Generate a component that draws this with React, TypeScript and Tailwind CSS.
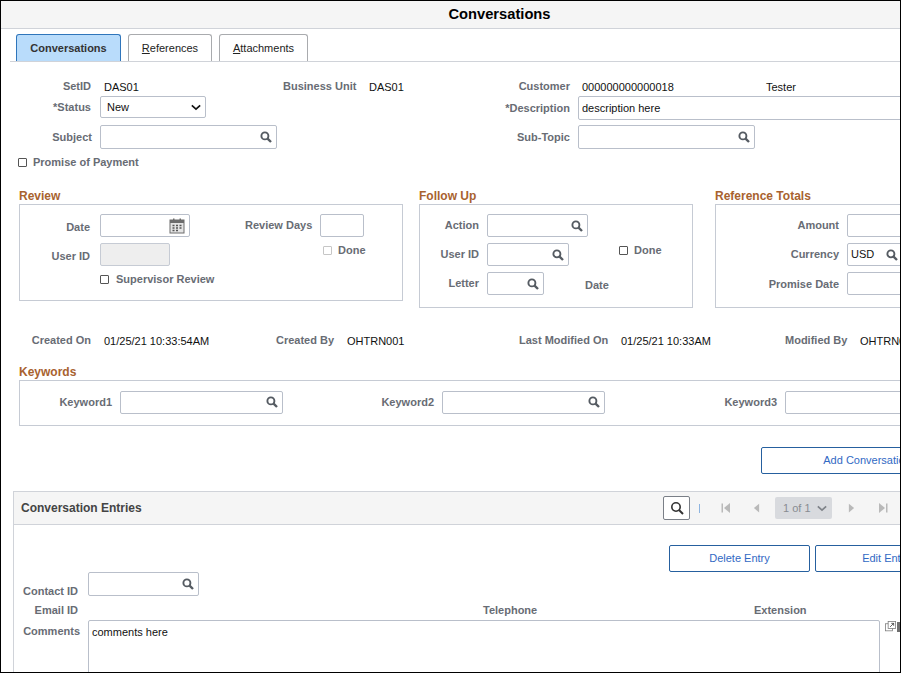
import { ReactNode } from 'react';

function Lbl({ className, children }: { className: string; children: ReactNode }) {
  return <div className={`text-right font-bold text-[#686c74] shrink-0 whitespace-nowrap ${className}`}>{children}</div>;
}

function Val({ className, children }: { className: string; children: ReactNode }) {
  return <div className={`text-[#111] shrink-0 whitespace-nowrap ${className}`}>{children}</div>;
}

function SearchIcon() {
  return (
    <svg viewBox="0 0 12 12" className="w-[12px] h-[12px] shrink-0" fill="none" stroke="#555b62">
      <circle cx="4.9" cy="4.9" r="3.5" strokeWidth="1.9" />
      <path d="M7.6 7.6 L11 11" strokeWidth="2.4" />
    </svg>
  );
}

function Lookup({ className, children }: { className: string; children?: ReactNode }) {
  return (
    <div className={`flex items-center justify-between shrink-0 bg-white border border-[#b9bfca] rounded-[2px] pl-[3px] pr-[4px] ${className}`}>
      <span className="text-[#111]">{children}</span>
      <SearchIcon />
    </div>
  );
}

function Box({ className }: { className: string }) {
  return <div className={`shrink-0 border border-[#b9bfca] rounded-[2px] ${className}`} />;
}

function Check({ className }: { className: string }) {
  return <div className={`w-[9px] h-[9px] shrink-0 border rounded-[1px] bg-white ${className}`} />;
}

function Heading({ children }: { children: ReactNode }) {
  return <div className="h-[16px] leading-[17px] font-bold text-[12px] text-[#a8622f]">{children}</div>;
}

function Button({ className, children }: { className: string; children: ReactNode }) {
  return (
    <div className={`flex items-center justify-center shrink-0 h-[27px] bg-white border border-[#26609f] rounded-[2px] text-[#3169c4] ${className}`}>
      {children}
    </div>
  );
}

export default function App() {
  return (
    <div className="w-[901px] h-[673px] border border-black overflow-hidden bg-white text-[11px] font-['Liberation_Sans',Arial,sans-serif]">
      <div className="w-[1000px]">
        <div className="h-[28px] pr-[3px] bg-[#f5f5f5] border-b border-[#d0d3d9] flex items-center justify-center text-[14.7px] font-bold text-black">
          Conversations
        </div>

        <div className="ml-[9px] mt-[5px] pl-[6px] h-[28px] flex items-end gap-[7px] border-b border-[#d0d3d9]">
          <div className="w-[105px] h-[27px] flex items-center justify-center bg-[#b9dcfb] border border-b-0 border-[#2f75bb] rounded-t-[3px] font-bold text-[#333]">
            Conversations
          </div>
          <div className="w-[84px] h-[27px] flex items-center justify-center bg-white border border-b-0 border-[#a9abae] rounded-t-[3px] text-[#222]">
            <span><span className="underline">R</span>eferences</span>
          </div>
          <div className="w-[89px] h-[27px] flex items-center justify-center bg-white border border-b-0 border-[#a9abae] rounded-t-[3px] text-[#222]">
            <span><span className="underline">A</span>ttachments</span>
          </div>
        </div>

        <div className="mt-[17px] h-[14px] flex items-center">
          <Lbl className="w-[90px]">SetID</Lbl>
          <Val className="ml-[13px] w-[179px] mt-[2px]">DAS01</Val>
          <Lbl className="w-[73px]">Business Unit</Lbl>
          <Val className="ml-[13px] w-[149px] mt-[2px]">DAS01</Val>
          <Lbl className="w-[52px]">Customer</Lbl>
          <Val className="ml-[12px] w-[184px] mt-[2px]">000000000000018</Val>
          <Val className="w-[60px] mt-[2px]">Tester</Val>
        </div>

        <div className="mt-[3px] h-[24px] flex items-center">
          <Lbl className="w-[90px] -mt-[2px]">*Status</Lbl>
          <div className="ml-[9px] w-[106px] h-[22px] self-start flex items-center justify-between border border-[#b9bfca] rounded-[2px] pl-[6px] pr-[4px] text-[#111] shrink-0">
            New
            <svg viewBox="0 0 12 8" className="w-[10px] h-[7px]" fill="none" stroke="#111" strokeWidth="2">
              <path d="M1 1.5 L6 6 L11 1.5" />
            </svg>
          </div>
          <Lbl className="w-[364px]">*Description</Lbl>
          <div className="ml-[8px] w-[400px] h-[24px] flex items-center pl-[3px] border border-[#b9bfca] rounded-[2px] text-[#111] shrink-0">
            description here
          </div>
        </div>

        <div className="mt-[5px] h-[24px] flex items-center">
          <Lbl className="w-[91px]">Subject</Lbl>
          <Lookup className="ml-[8px] w-[177px] h-[24px]" />
          <Lbl className="w-[293px]">Sub-Topic</Lbl>
          <Lookup className="ml-[8px] w-[177px] h-[24px]" />
        </div>

        <div className="mt-[6px] h-[14px] pl-[17px] flex items-center">
          <Check className="border-[#555]" />
          <span className="ml-[6px] font-bold text-[#686c74]">Promise of Payment</span>
        </div>

        <div className="mt-[19px] pl-[18px] flex items-start">
          <div className="w-[384px] shrink-0">
            <Heading>Review</Heading>
            <div className="h-[97px] border border-[#c6cbd4] flex items-start pt-[9px]">
              <div className="w-[225px] shrink-0">
                <div className="h-[23px] flex items-center">
                  <Lbl className="w-[70px] mt-[4px]">Date</Lbl>
                  <div className="ml-[10px] w-[90px] h-[23px] flex items-center justify-end pr-[4px] border border-[#b9bfca] rounded-[2px]">
                    <svg viewBox="0 0 16 16" className="w-[16px] h-[16px]">
                      <rect x="1" y="2" width="14" height="13" fill="#e4e4e4" stroke="#6c6c6c" />
                      <rect x="1" y="2" width="14" height="3" fill="#6c6c6c" />
                      <rect x="4" y="0.5" width="1.5" height="3" fill="#6c6c6c" />
                      <rect x="10.5" y="0.5" width="1.5" height="3" fill="#6c6c6c" />
                      <path d="M3.5 7.5h2M7 7.5h2M10.5 7.5h2M3.5 10h2M7 10h2M10.5 10h2M3.5 12.5h2M7 12.5h2" stroke="#555" strokeWidth="1.4" />
                    </svg>
                  </div>
                </div>
                <div className="mt-[6px] h-[23px] flex items-center">
                  <Lbl className="w-[70px] mt-[4px]">User ID</Lbl>
                  <div className="ml-[10px] w-[70px] h-[23px] bg-[#eeeeee] border border-[#c6cbd4] rounded-[2px]" />
                </div>
                <div className="mt-[6px] h-[14px] pl-[80px] flex items-center">
                  <Check className="border-[#555]" />
                  <span className="ml-[7px] font-bold text-[#686c74]">Supervisor Review</span>
                </div>
              </div>
              <div className="shrink-0">
                <div className="h-[23px] flex items-center">
                  <Lbl className="w-[67px]">Review Days</Lbl>
                  <Box className="ml-[8px] w-[44px] h-[23px]" />
                </div>
                <div className="mt-[6px] h-[14px] pl-[78px] flex items-center">
                  <Check className="border-[#c6c6c6] bg-[#f3f3f3]" />
                  <span className="ml-[6px] font-bold text-[#686c74]">Done</span>
                </div>
              </div>
            </div>
          </div>

          <div className="w-[274px] ml-[16px] shrink-0">
            <Heading>Follow Up</Heading>
            <div className="h-[104px] border border-[#c6cbd4] pt-[9px]">
              <div className="h-[23px] flex items-center">
                <Lbl className="w-[59px]">Action</Lbl>
                <Lookup className="ml-[8px] w-[101px] h-[23px]" />
              </div>
              <div className="mt-[6px] h-[23px] flex items-center">
                <Lbl className="w-[59px]">User ID</Lbl>
                <Lookup className="ml-[8px] w-[82px] h-[23px]" />
                <Check className="ml-[50px] -mt-[8px] border-[#555]" />
                <span className="ml-[6px] -mt-[8px] font-bold text-[#686c74]">Done</span>
              </div>
              <div className="mt-[6px] h-[23px] flex items-center">
                <Lbl className="w-[59px]">Letter</Lbl>
                <Lookup className="ml-[8px] w-[57px] h-[23px]" />
                <span className="ml-[41px] mt-[3px] text-[#686c74] font-bold">Date</span>
              </div>
            </div>
          </div>

          <div className="w-[290px] ml-[22px] shrink-0">
            <Heading>Reference Totals</Heading>
            <div className="h-[104px] border border-[#c6cbd4] pt-[9px]">
              <div className="h-[23px] flex items-center">
                <Lbl className="w-[123px]">Amount</Lbl>
                <Box className="ml-[8px] w-[100px] h-[23px]" />
              </div>
              <div className="mt-[6px] h-[23px] flex items-center">
                <Lbl className="w-[123px]">Currency</Lbl>
                <Lookup className="ml-[8px] w-[56px] h-[23px]">USD</Lookup>
              </div>
              <div className="mt-[6px] h-[23px] flex items-center">
                <Lbl className="w-[123px] mt-[2px]">Promise Date</Lbl>
                <Box className="ml-[8px] w-[100px] h-[23px]" />
              </div>
            </div>
          </div>
        </div>

        <div className="mt-[25px] h-[14px] flex items-center">
          <Lbl className="w-[90px]">Created On</Lbl>
          <Val className="ml-[13px] w-[172px] mt-[2px]">01/25/21 10:33:54AM</Val>
          <Lbl className="w-[58px]">Created By</Lbl>
          <Val className="ml-[13px] w-[172px] mt-[2px]">OHTRN001</Val>
          <Lbl className="w-[88px]">Last Modified On</Lbl>
          <Val className="ml-[14px] w-[164px] mt-[2px]">01/25/21 10:33AM</Val>
          <Lbl className="w-[62px]">Modified By</Lbl>
          <Val className="ml-[13px] mt-[2px]">OHTRN001</Val>
        </div>

        <div className="mt-[17px] pl-[18px]">
          <Heading>Keywords</Heading>
          <div className="h-[46px] w-[960px] pb-[2px] border border-[#c6cbd4] flex items-center">
            <Lbl className="w-[92px]">Keyword1</Lbl>
            <Lookup className="ml-[8px] w-[163px] h-[23px]" />
            <Lbl className="w-[151px]">Keyword2</Lbl>
            <Lookup className="ml-[8px] w-[163px] h-[23px]" />
            <Lbl className="w-[172px]">Keyword3</Lbl>
            <Lookup className="ml-[8px] w-[163px] h-[23px]" />
          </div>
        </div>

        <div className="mt-[21px] pl-[760px]">
          <Button className="w-[212px]">Add Conversation</Button>
        </div>

        <div className="mt-[17px] ml-[12px] border-l border-[#d0d3d9]">
          <div className="h-[34px] bg-[#f5f5f5] border-y border-[#d0d3d9] flex items-center pl-[7px]">
            <span className="w-[642px] shrink-0 text-[12px] font-bold text-[#444]">Conversation Entries</span>
            <div className="w-[27px] h-[24px] shrink-0 flex items-center justify-center bg-white border border-[#7a7f87] rounded-[2px]">
              <svg viewBox="0 0 14 14" className="w-[14px] h-[14px]" fill="none" stroke="#333" strokeWidth="1.6">
                <circle cx="6" cy="6" r="4.2" />
                <path d="M9 9 L13 13" strokeWidth="2" />
              </svg>
            </div>
            <div className="ml-[9px] w-[1px] h-[9px] bg-[#8db4e0] shrink-0" />
            <svg viewBox="0 0 10 10" className="ml-[21px] w-[10px] h-[10px] shrink-0" fill="#b9b9b9">
              <rect x="0.5" y="0.5" width="1.5" height="9" />
              <path d="M9 0 L3 5 L9 10 Z" />
            </svg>
            <svg viewBox="0 0 8 10" className="ml-[22px] w-[7px] h-[10px] shrink-0" fill="#b9b9b9">
              <path d="M7 0 L1 5 L7 10 Z" />
            </svg>
            <div className="ml-[15px] w-[57px] h-[22px] shrink-0 flex items-center justify-between pl-[8px] pr-[5px] bg-[#d8dade] rounded-[2px] text-[#888c92]">
              1 of 1
              <svg viewBox="0 0 12 8" className="w-[10px] h-[7px]" fill="none" stroke="#7f8389" strokeWidth="2">
                <path d="M1 1.5 L6 6 L11 1.5" />
              </svg>
            </div>
            <svg viewBox="0 0 8 10" className="ml-[16px] w-[7px] h-[10px] shrink-0" fill="#b9b9b9">
              <path d="M1 0 L7 5 L1 10 Z" />
            </svg>
            <svg viewBox="0 0 10 10" className="ml-[23px] w-[10px] h-[10px] shrink-0" fill="#b9b9b9">
              <path d="M1 0 L7 5 L1 10 Z" />
              <rect x="8" y="0.5" width="1.5" height="9" />
            </svg>
          </div>

          <div className="pt-[20px]">
            <div className="flex pl-[655px] gap-[5px]">
              <Button className="w-[141px]">Delete Entry</Button>
              <Button className="w-[142px]">Edit Entry</Button>
            </div>
            <div className="flex items-end h-[24px]">
              <Lbl className="w-[64px] leading-[14px] -mb-[2px]">Contact ID</Lbl>
              <Lookup className="ml-[10px] w-[111px] h-[24px]" />
            </div>
            <div className="mt-[7px] h-[14px] flex items-center">
              <Lbl className="w-[64px]">Email ID</Lbl>
              <Lbl className="ml-[405px] w-[53px]">Telephone</Lbl>
              <Lbl className="ml-[218px] w-[52px]">Extension</Lbl>
            </div>
            <div className="mt-[3px] flex items-start">
              <Lbl className="w-[66px] mt-[3px]">Comments</Lbl>
              <div className="ml-[8px] w-[792px] h-[60px] pl-[3px] pt-[3px] border border-[#b9bfca] rounded-[2px] text-[#111]">
                comments here
              </div>
              <svg viewBox="0 0 14 14" className="ml-[5px] mt-[1px] w-[11px] h-[11px] shrink-0" fill="none" stroke="#7c7c7c">
                <rect x="0.5" y="3.5" width="9" height="9" />
                <rect x="4" y="0.5" width="9.5" height="9" fill="#fff" />
                <path d="M6.5 7.5 L11 3 M8 3 H11 V6" stroke="#333" />
              </svg>
              <div className="ml-[1px] mt-[2px] w-[8px] h-[10px] shrink-0 bg-[#6f6f6f]" />
            </div>
          </div>
        </div>
      </div>
    </div>
  );
}
